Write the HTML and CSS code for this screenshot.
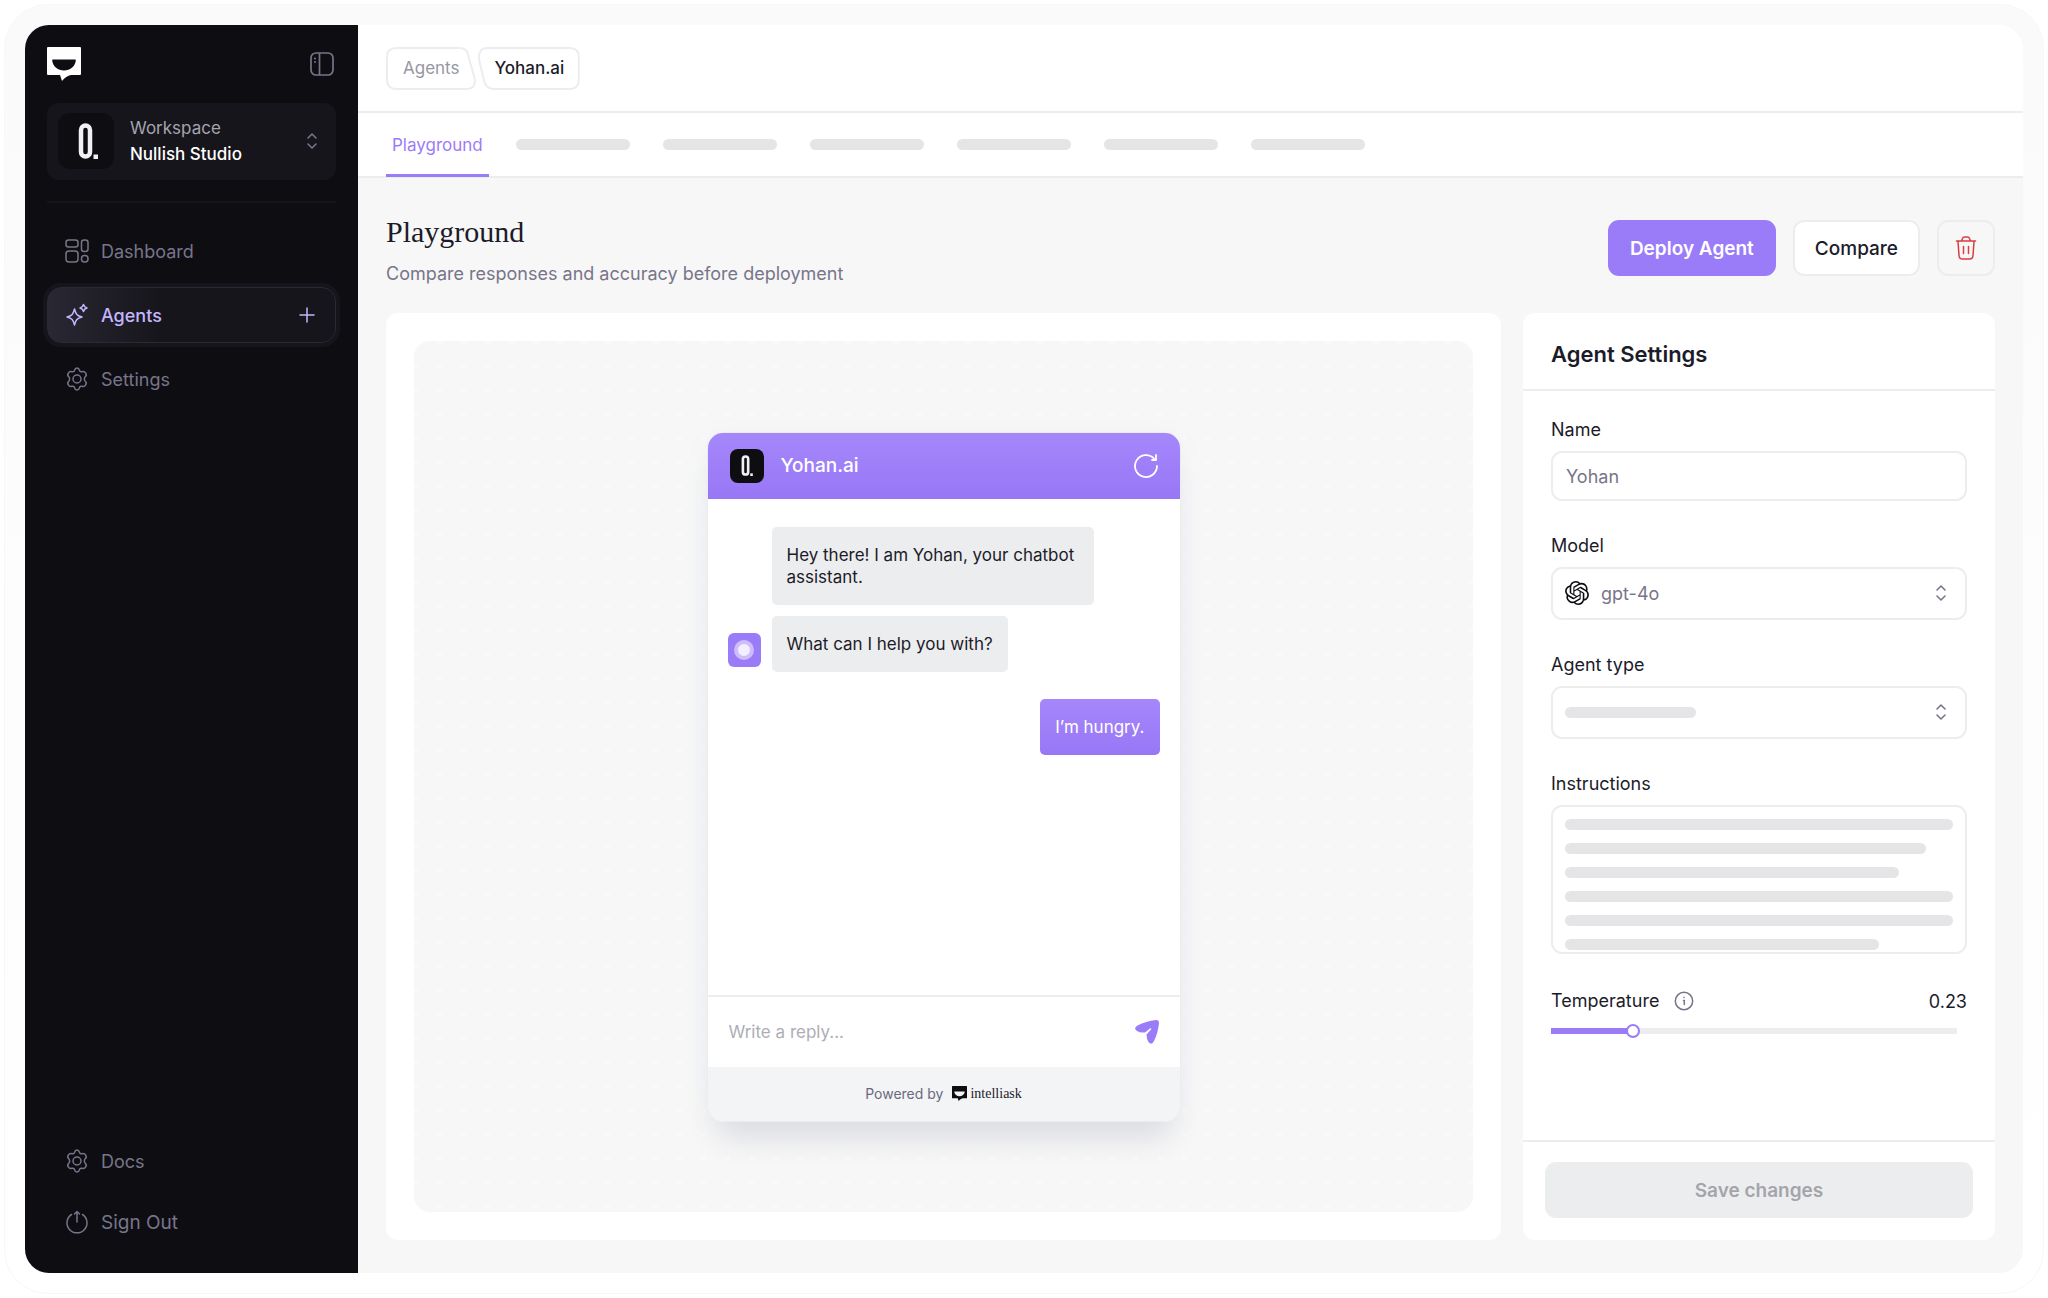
FILE: index.html
```html
<!DOCTYPE html>
<html lang="en">
<head>
<meta charset="utf-8">
<meta name="viewport" content="width=device-width, initial-scale=1">
<title>Yohan.ai – Playground</title>
<link rel="stylesheet" href="styles.css">
</head>
<body>
<svg class="sprite" aria-hidden="true">
  <symbol id="logo" viewBox="0 0 34 34"><path fill="currentColor" fill-rule="evenodd" d="M1 0h32q1 0 1 1v26q0 1-1 1H24q-5 1-9 6l-2-6H1q-1 0-1-1V1q0-1 1-1ZM6 12.500q-1 0-.8 1.200C6 19.500 11 23.500 17 23.500s11-4 11.800-9.800q.2-1.200-.8-1.200Z"/></symbol>
  <symbol id="zero" viewBox="0 0 20 36"><rect x="3" y="2.500" width="9" height="31" rx="4.500" fill="none" stroke="#f1f1f4" stroke-width="4.500"/><rect x="15.500" y="31.500" width="4.500" height="4.500" fill="#f1f1f4"/></symbol>
  <symbol id="gear" viewBox="0 0 24 24"><path fill="none" stroke="currentColor" stroke-width="1.500" stroke-linejoin="round" d="M9.600 3.200C10 1.500 10.700 1 12 1s2 .5 2.400 2.200c.3 1.300 1.300 1.800 2.600 1.500 1.800-.5 2.700-.2 3.700 1.400s.8 2.600-.5 3.700c-1.100 1-1.100 3.400 0 4.400 1.300 1.100 1.500 2.100.5 3.700s-1.900 1.900-3.700 1.400c-1.300-.3-2.300.2-2.600 1.500C14 22.500 13.300 23 12 23s-2-.5-2.400-2.200c-.3-1.300-1.300-1.800-2.600-1.500-1.800.5-2.700.2-3.700-1.400s-.8-2.600.5-3.700c1.100-1 1.100-3.400 0-4.400-1.300-1.100-1.500-2.100-.5-3.700s1.900-1.900 3.700-1.400c1.300.3 2.300-.2 2.600-1.500Z"/><circle cx="12" cy="12" r="4" fill="none" stroke="currentColor" stroke-width="1.500"/></symbol>
  <symbol id="updown" viewBox="0 0 12 18"><path fill="none" stroke="currentColor" stroke-width="1.600" stroke-linecap="round" stroke-linejoin="round" d="m2 6 4-4 4 4M2 12l4 4 4-4"/></symbol>
</svg>
<div class="frame">
<div class="app">
  <aside class="sidebar">
    <div class="brand">
      <svg class="brand-logo" role="img" aria-label="intelliask"><use href="#logo"/></svg>
      <button class="icon-button" aria-label="Toggle sidebar"><svg class="icon" viewBox="0 0 24 24" fill="none" stroke="currentColor" stroke-width="1.700"><rect x="1" y="1" width="22" height="22" rx="5"/><path d="M9.500 1v22M4 6.500h2M4 10h2"/></svg></button>
    </div>
    <button class="workspace">
      <span class="workspace-avatar"><svg><use href="#zero"/></svg></span>
      <span class="workspace-text"><span class="workspace-label">Workspace</span><span class="workspace-name">Nullish Studio</span></span>
      <svg class="updown"><use href="#updown"/></svg>
    </button>
    <nav class="nav">
      <a class="nav-item" href="#"><svg class="icon" viewBox="0 0 24 24" fill="none" stroke="currentColor" stroke-width="1.500"><rect x="1" y="1" width="12" height="7" rx="2.500"/><rect x="1" y="12" width="12" height="11" rx="3"/><rect x="16.500" y="1" width="6.500" height="11.500" rx="2.500"/><rect x="16.500" y="16.500" width="6.500" height="6.500" rx="3"/></svg>Dashboard</a>
      <a class="nav-item active" href="#"><svg class="icon" viewBox="0 0 24 24" fill="none" stroke="currentColor" stroke-width="1.500" stroke-linejoin="round"><path d="M9.500 6c1.300 5 2.500 6.700 7.500 8-5 1.300-6.200 3-7.500 8-1.300-5-2.500-6.700-7.500-8 5-1.300 6.200-3 7.500-8ZM18.500 1.500c.6 2.200 1.300 3 3.500 3.500-2.200.5-2.900 1.300-3.500 3.500C17.900 6.300 17.200 5.500 15 5c2.200-.5 2.900-1.300 3.500-3.500Z"/></svg>Agents<svg class="plus" viewBox="0 0 16 16" fill="none" stroke="currentColor" stroke-width="1.500" stroke-linecap="round"><path d="M8 1v14M1 8h14"/></svg></a>
      <a class="nav-item" href="#"><svg class="icon"><use href="#gear"/></svg>Settings</a>
    </nav>
    <nav class="nav nav-bottom">
      <a class="nav-item" href="#"><svg class="icon"><use href="#gear"/></svg>Docs</a>
      <a class="nav-item sign-out" href="#"><svg class="icon" viewBox="0 0 24 24" fill="none" stroke="currentColor" stroke-width="1.500" stroke-linecap="round" stroke-linejoin="round"><path d="M6.500 4.500a10 10 0 1 0 11 0M12 12V1.500M9.500 4 12 1.500 14.500 4"/></svg>Sign Out</a>
    </nav>
  </aside>
  <div class="content">
    <header class="topbar">
      <nav class="crumbs" aria-label="Breadcrumb">
        <a class="crumb" href="#"><svg class="crumb-shape" viewBox="0 0 90 42" preserveAspectRatio="none"><path d="M10 1h63q8 0 9 8l6 21q2 11-8 11H10q-9 0-9-9V10q0-9 9-9Z"/></svg><span>Agents</span></a>
        <a class="crumb current" href="#" aria-current="page"><svg class="crumb-shape" viewBox="0 0 102 42" preserveAspectRatio="none"><path d="M10 1h82q9 0 9 9v22q0 9-9 9H16q-8 0-10-8L1 12Q0 1 10 1Z"/></svg><span>Yohan.ai</span></a>
      </nav>
    </header>
    <nav class="tabs">
      <a class="tab" href="#" aria-current="page">Playground</a>
      <span class="skeleton tab-skeleton"></span><span class="skeleton tab-skeleton"></span><span class="skeleton tab-skeleton"></span><span class="skeleton tab-skeleton"></span><span class="skeleton tab-skeleton"></span><span class="skeleton tab-skeleton"></span>
    </nav>
    <main class="page">
      <div class="page-head">
        <div class="page-title">
          <h1>Playground</h1>
          <p>Compare responses and accuracy before deployment</p>
        </div>
        <div class="actions">
          <button class="button primary">Deploy Agent</button>
          <button class="button">Compare</button>
          <button class="button danger" aria-label="Delete agent"><svg class="icon" viewBox="0 0 24 24" fill="none" stroke="currentColor" stroke-width="1.500" stroke-linecap="round" stroke-linejoin="round"><path d="M2.500 5h19M4 5.500l1 14Q5.200 23 8.500 23h7q3.300 0 3.500-3.500l1-14M7.500 5l1-2.500Q9 1 10.500 1h3Q15 1 15.500 2.500l1 2.500M9.500 10.500v7M14.500 10.500v7"/></svg></button>
        </div>
      </div>
      <div class="panels">
        <section class="card preview">
          <div class="canvas">
            <div class="chat">
              <header class="chat-head">
                <span class="chat-avatar"><svg><use href="#zero"/></svg></span>
                <h2>Yohan.ai</h2>
                <button class="icon-button" aria-label="Restart chat"><svg class="icon" viewBox="0 0 24 24" fill="none" stroke="currentColor" stroke-width="1.800" stroke-linecap="round" stroke-linejoin="round"><path d="M23 12A11 11 0 1 1 20 4.500M22 1v5h-4"/></svg></button>
              </header>
              <div class="messages">
                <div class="bot-group">
                  <span class="bot-avatar"></span>
                  <div class="bot-bubbles">
                    <p class="bubble">Hey there! I am Yohan, your chatbot assistant.</p>
                    <p class="bubble">What can I help you with?</p>
                  </div>
                </div>
                <p class="bubble mine">I’m hungry.</p>
              </div>
              <form class="composer">
                <input type="text" placeholder="Write a reply..." aria-label="Write a reply">
                <button type="button" class="icon-button" aria-label="Send"><svg class="icon" viewBox="0 0 24 24" fill="currentColor"><path d="M21 0q3 0 3 3-1 10-5 18-2.500 5-5.500 1-2-3-2-7.500l4.500-5q1-1.800-1-1L10 12.500q-5 .5-8-1.500-4-2.500.5-5.500Q11 1 21 0Z"/></svg></button>
              </form>
              <footer class="chat-foot"><span>Powered by</span><svg><use href="#logo"/></svg><b>intelliask</b></footer>
            </div>
          </div>
        </section>
        <form class="card settings">
          <h2>Agent Settings</h2>
          <div class="fields">
            <div class="field">
              <label for="name">Name</label>
              <input id="name" class="control" type="text" placeholder="Yohan">
            </div>
            <div class="field">
              <label for="model">Model</label>
              <div class="select-wrap">
                <svg class="model-logo" viewBox="0 0 24 24" fill="currentColor" aria-hidden="true"><path d="M22.282 9.821a5.985 5.985 0 0 0-.516-4.910 6.046 6.046 0 0 0-6.510-2.900A6.065 6.065 0 0 0 4.981 4.182a5.985 5.985 0 0 0-3.998 2.900 6.046 6.046 0 0 0 .743 7.097 5.980 5.980 0 0 0 .510 4.911 6.051 6.051 0 0 0 6.515 2.900A5.985 5.985 0 0 0 13.260 24a6.056 6.056 0 0 0 5.772-4.206 5.990 5.990 0 0 0 3.998-2.900 6.056 6.056 0 0 0-.748-7.073zM13.260 22.430a4.476 4.476 0 0 1-2.876-1.040l.141-.081 4.779-2.758a.795.795 0 0 0 .393-.681v-6.737l2.020 1.169a.071.071 0 0 1 .038.052v5.583a4.504 4.504 0 0 1-4.495 4.493zM3.600 18.304a4.471 4.471 0 0 1-.535-3.014l.142.085 4.783 2.759a.771.771 0 0 0 .780 0l5.843-3.369v2.332a.080.080 0 0 1-.033.062L9.740 19.950a4.500 4.500 0 0 1-6.140-1.646zM2.341 7.896a4.485 4.485 0 0 1 2.366-1.973V11.600a.766.766 0 0 0 .388.676l5.815 3.355-2.020 1.168a.076.076 0 0 1-.071 0l-4.830-2.786A4.504 4.504 0 0 1 2.341 7.872zm16.597 3.855l-5.833-3.387L15.119 7.200a.076.076 0 0 1 .071 0l4.830 2.791a4.494 4.494 0 0 1-.676 8.105v-5.678a.790.790 0 0 0-.407-.667zm2.010-3.023l-.141-.085-4.774-2.782a.776.776 0 0 0-.785 0L9.409 9.230V6.897a.066.066 0 0 1 .028-.061l4.830-2.787a4.499 4.499 0 0 1 6.680 4.660zm-12.640 4.135l-2.020-1.164a.080.080 0 0 1-.038-.057V6.075a4.499 4.499 0 0 1 7.375-3.453l-.142.080L8.704 5.460a.795.795 0 0 0-.393.681zm1.097-2.365l2.602-1.500 2.607 1.500v2.999l-2.597 1.500-2.607-1.500z"/></svg>
                <select id="model" class="control with-logo"><option>gpt-4o</option></select>
                <svg class="updown"><use href="#updown"/></svg>
              </div>
            </div>
            <div class="field">
              <label for="type">Agent type</label>
              <div class="select-wrap">
                <span class="skeleton value-skeleton"></span>
                <select id="type" class="control"><option></option></select>
                <svg class="updown"><use href="#updown"/></svg>
              </div>
            </div>
            <div class="field">
              <label for="instructions">Instructions</label>
              <div class="area-wrap">
                <textarea id="instructions" class="control"></textarea>
                <div class="lines"><i class="skeleton"></i><i class="skeleton" style="width:93%"></i><i class="skeleton" style="width:86%"></i><i class="skeleton"></i><i class="skeleton"></i><i class="skeleton" style="width:81%"></i></div>
              </div>
            </div>
            <div class="field temperature">
              <div class="temperature-head">
                <label for="temp">Temperature</label>
                <svg class="info" viewBox="0 0 20 20" fill="none" stroke="currentColor" stroke-width="1.500" stroke-linecap="round"><circle cx="10" cy="10" r="8.700"/><path d="M9.500 9.500h.8v4M10 6.300v.1"/></svg>
                <output for="temp">0.23</output>
              </div>
              <input id="temp" type="range" min="0" max="1.200" step="0.010" value="0.230">
            </div>
          </div>
          <div class="settings-foot"><button type="button" class="button save" disabled>Save changes</button></div>
        </form>
      </div>
    </main>
  </div>
</div>
</div>
</body>
</html>
```
FILE: styles.css
```css
* { box-sizing: border-box; }
body { margin: 0; padding: 4px; background: #fff; font-family: Inter, "Liberation Sans", sans-serif; font-size: 18px; color: #1c1b29; }
h1, h2, p { margin: 0; font-weight: 400; }
a { color: inherit; text-decoration: none; }
button, input, select, textarea { font: inherit; color: inherit; }
button { margin: 0; padding: 0; border: 0; background: none; }
.sprite { display: none; }
.icon { display: block; flex: none; width: 24px; height: 24px; }
.icon-button { display: block; }
.skeleton { display: block; height: 11px; border-radius: 6px; background: #e5e5e7; }
.updown { flex: none; width: 12px; height: 18px; color: #77758a; }

.frame { display: flex; min-height: calc(100vh - 8px); padding: 20px; border: 1px solid #f7f7f7; border-radius: 44px; background: linear-gradient(#fafafa, #fff); }
.app { display: flex; flex: 1; overflow: hidden; border-radius: 24px; background: #f7f7f7; }

.sidebar { display: flex; flex: none; flex-direction: column; width: 333px; padding: 22px 22px 23px; background: #0e0d12; color: #77758a; }
.brand { display: flex; align-items: center; justify-content: space-between; height: 34px; padding-right: 2px; color: #fff; }
.brand-logo { width: 34px; height: 34px; }
.brand .icon-button { color: #77758a; }
.workspace { display: flex; align-items: center; margin-top: 22px; padding: 10px 18px 11px 11px; border-radius: 12px; background: #16151b; text-align: left; }
.workspace-avatar { display: flex; align-items: center; justify-content: center; width: 56px; height: 56px; padding-left: 4px; border-radius: 12px; background: #0e0d12; }
.workspace-avatar svg { width: 20px; height: 36px; }
.workspace-text { flex: 1; margin-left: 16px; }
.workspace-text span { display: block; font-size: 17px; line-height: 26px; }
.workspace-label { color: #a5a4af; }
.workspace-name { color: #fff; font-weight: 500; }
.nav { display: flex; flex-direction: column; gap: 8px; margin-top: 21px; padding-top: 20px; border-top: 2px solid #16151b; }
.nav-item { display: flex; align-items: center; gap: 12px; height: 56px; padding: 0 18px; border-radius: 14px; }
.nav-item.active { border: 1px solid #2a2934; background: linear-gradient(90deg, #292833, #16151b 40%); box-shadow: 0 0 0 4px #16151b; color: #c4b5fd; font-weight: 500; padding: 0 20px 0 17px; }
.sign-out { font-size: 19px; }
.plus { width: 16px; height: 16px; margin-left: auto; }
.nav-bottom { gap: 5px; margin-top: auto; padding: 0; border: 0; }

.content { display: flex; flex: 1; flex-direction: column; min-width: 0; }
.topbar { padding: 22px 28px 21px; border-bottom: 2px solid #ededee; background: #fff; }
.crumbs { display: flex; gap: 2px; }
.crumb { position: relative; padding: 0 17px; line-height: 43px; font-size: 17px; color: #9796a3; }
.crumb.current { padding: 0 16px; color: #1c1b29; font-weight: 500; }
.crumb-shape { position: absolute; inset: 0; width: 100%; height: 100%; fill: none; stroke: #ededee; stroke-width: 2; }
.tabs { display: flex; align-items: center; gap: 33px; height: 65px; padding: 0 28px; border-bottom: 2px solid #ededee; background: #fff; }
.tab { height: 65px; margin-right: -6px; padding: 0 6px; border-bottom: 3px solid #9b7cf8; color: #9b7cf8; font-size: 17px; line-height: 66px; }
.tab-skeleton { width: 114px; }

.page { display: flex; flex: 1; flex-direction: column; padding: 34px 28px 33px; }
.page-head { display: flex; align-items: center; justify-content: space-between; height: 72px; }
.page-title { padding-top: 8px; }
h1 { font-family: "Liberation Serif", serif; font-size: 30px; line-height: 44px; }
.page-head p { color: #77758a; line-height: 40px; }
.actions { display: flex; gap: 17px; }
.button { height: 56px; padding: 0 20px; border: 2px solid #ededee; border-radius: 11px; background: #fff; font-size: 19px; font-weight: 500; }
.primary { border-color: #9b7cf8; background: #9b7cf8; color: #fff; font-weight: 600; }
.danger { padding: 0 15px; background: #f7f7f7; color: #d93d42; }

.panels { display: flex; flex: 1; gap: 22px; margin-top: 29px; }
.card { border-radius: 12px; background: #fff; }
.preview { display: flex; flex: 1; padding: 28px; }
.canvas { display: flex; flex: 1; align-items: center; justify-content: center; padding: 64px 24px; border-radius: 16px; background: #f7f7f7 radial-gradient(circle, #fafafa 1px, transparent 3px) -10px -10px / 24px 24px; }
.chat { display: flex; flex-direction: column; width: 474px; height: 690px; overflow: hidden; border: 1px solid #ebecef; border-radius: 16px; background: #fff; box-shadow: 0 28px 30px -12px #dcdde1, 0 4px 24px #eef0f4; }
.chat-head { display: flex; align-items: center; height: 66px; padding: 0 22px; background: linear-gradient(#a587fb, #9877f5); color: #fff; }
.chat-head h2 { flex: 1; margin-left: 17px; font-size: 19px; font-weight: 500; }
.chat-avatar { display: flex; align-items: center; justify-content: center; width: 34px; height: 34px; border-radius: 8px; background: #0e0d12; }
.chat-avatar svg { width: 12px; height: 21px; }
.messages { display: flex; flex: 1; flex-direction: column; padding: 28px 20px; }
.bot-group { display: flex; align-items: flex-end; gap: 11px; }
.bot-avatar { display: flex; align-items: center; justify-content: center; width: 33px; height: 34px; margin-bottom: 5px; border-radius: 6px; background: #9b7cf8; }
.bot-avatar::before { content: ""; box-sizing: border-box; width: 20px; height: 20px; border: 4px solid #cdbdfb; border-radius: 50%; background: #f3effe; }
.bot-bubbles { display: flex; flex-direction: column; align-items: flex-start; gap: 11px; }
.bubble { max-width: 322px; padding: 17px 15px; border-radius: 5px; background: #ecedef; font-size: 17px; line-height: 22px; }
.bubble.mine { align-self: flex-end; margin-top: 27px; background: linear-gradient(#a587fb, #9877f5); color: #fff; }
.composer { display: flex; align-items: center; height: 72px; padding: 0 21px; border-top: 2px solid #ededf0; }
.composer input { flex: 1; min-width: 0; padding: 0; border: 0; outline: 0; background: none; font-size: 17px; }
.composer input::placeholder { color: #aeadb6; }
.composer .icon-button { color: #9b7cf8; }
.chat-foot { display: flex; align-items: center; justify-content: center; height: 54px; background: #f3f4f6; font-size: 14px; color: #6b697c; }
.chat-foot svg { width: 15px; height: 15px; margin: 0 3px 0 9px; color: #0e0d12; }
.chat-foot b { color: #1c1b29; font-family: "Liberation Serif", serif; font-size: 14px; font-weight: 400; }

.settings { display: flex; flex: none; flex-direction: column; width: 472px; }
.settings h2 { padding: 27px 28px 21px; border-bottom: 2px solid #ededee; font-size: 22px; line-height: 28px; font-weight: 600; }
.fields { display: flex; flex: 1; flex-direction: column; gap: 33px; padding: 27px 28px 0; }
.field label { display: block; margin-bottom: 9px; line-height: 24px; }
.control { display: block; width: 100%; height: 53px; padding: 0 13px; border: 2px solid #ededee; border-radius: 11px; outline: 0; background: transparent; color: #77758a; appearance: none; }
.control::placeholder { color: #77758a; }
#name { height: 50px; }
.select-wrap, .area-wrap { position: relative; }
.with-logo { padding-left: 48px; }
.model-logo { position: absolute; left: 14px; top: 14px; width: 24px; height: 24px; color: #0e0d12; }
.select-wrap .updown { position: absolute; right: 20px; top: 17px; pointer-events: none; }
.value-skeleton { position: absolute; left: 14px; top: 21px; width: 131px; pointer-events: none; }
textarea.control { height: 149px; resize: none; }
.lines { position: absolute; inset: 14px 14px 0; display: flex; flex-direction: column; gap: 13px; pointer-events: none; }
.temperature { padding-top: 2px; }
.temperature-head { display: flex; align-items: center; gap: 15px; }
.temperature-head label { margin: 0; }
.temperature-head output { margin-left: auto; }
.info { width: 20px; height: 20px; color: #77758a; }
input[type="range"] { display: block; width: calc(100% - 10px); height: 14px; margin: 11px 0 0; appearance: none; background: linear-gradient(90deg, #9b7cf8 20%, #ecedef 20%) center / 100% 6px no-repeat; border-radius: 4px; }
input[type="range"]::-webkit-slider-thumb { appearance: none; width: 14px; height: 14px; border: 2px solid #9b7cf8; border-radius: 50%; background: #fff; }
.settings-foot { padding: 20px 22px 22px; border-top: 2px solid #ededee; }
.save { display: block; width: 100%; border: 0; background: #ecedef; color: #a5a4ab; font-weight: 600; }
```
